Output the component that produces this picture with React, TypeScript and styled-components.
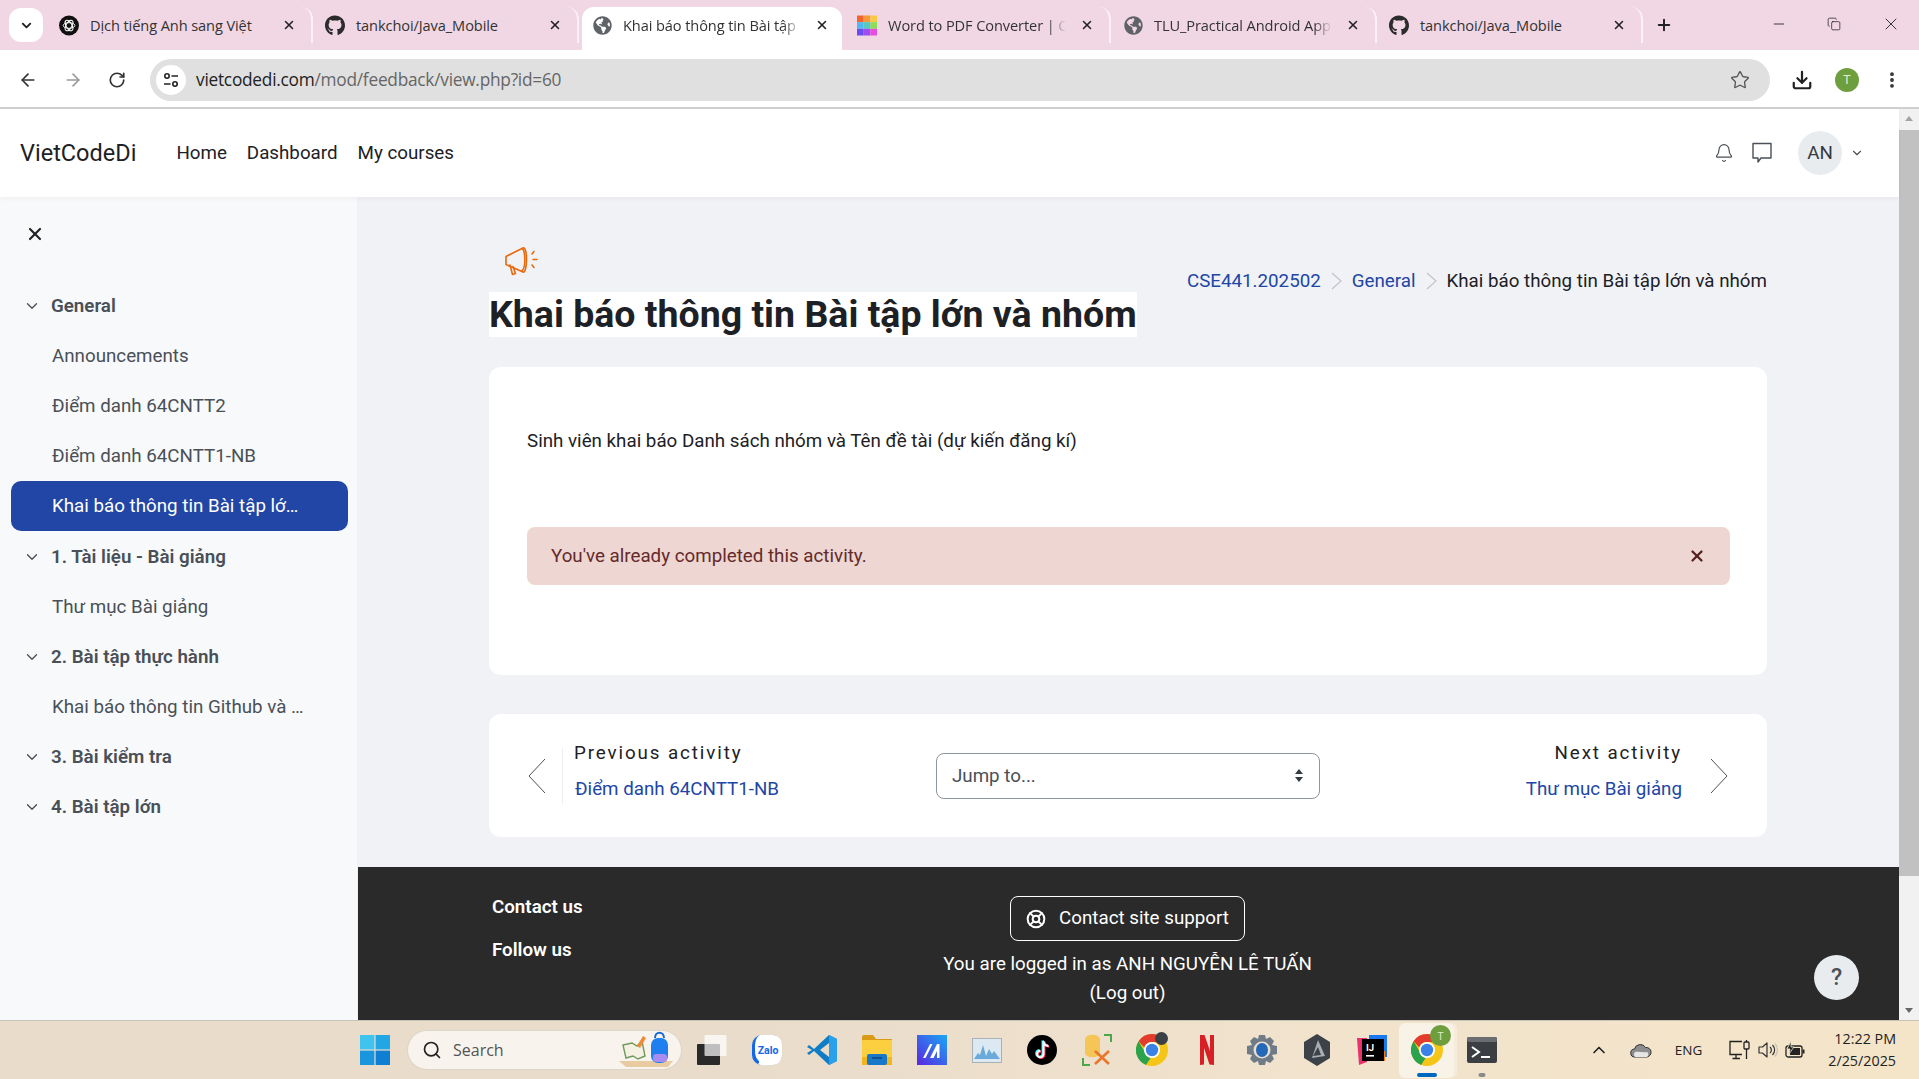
import React from 'react';
import styled, { createGlobalStyle } from 'styled-components';
import {
    ArrowLeft, ArrowRight, RotateCw, Star, Download, EllipsisVertical, Search, Bell, X, ChevronDown,
    ChevronUp, Minus, Plus, Copy, LifeBuoy,
} from 'lucide-react';
import { FaGithub, FaGlobeAmericas } from 'react-icons/fa';

/*
 * Data
*/
type TabData = { title: string; icon: 'gpt' | 'github' | 'globe' | 'pdf'; active?: boolean; fade?: boolean };

const tabs: TabData[] = [
    { title: 'Dịch tiếng Anh sang Việt', icon: 'gpt' },
    { title: 'tankchoi/Java_Mobile', icon: 'github' },
    { title: 'Khai báo thông tin Bài tập', icon: 'globe', active: true, fade: true },
    { title: 'Word to PDF Converter | C', icon: 'pdf', fade: true },
    { title: 'TLU_Practical Android App', icon: 'globe', fade: true },
    { title: 'tankchoi/Java_Mobile', icon: 'github' },
];

type NavRow = { label: string; kind: 'section' | 'item' | 'active' };

const navRows: NavRow[] = [
    { label: 'General', kind: 'section' },
    { label: 'Announcements', kind: 'item' },
    { label: 'Điểm danh 64CNTT2', kind: 'item' },
    { label: 'Điểm danh 64CNTT1-NB', kind: 'item' },
    { label: 'Khai báo thông tin Bài tập lớn và nhóm', kind: 'active' },
    { label: '1. Tài liệu - Bài giảng', kind: 'section' },
    { label: 'Thư mục Bài giảng', kind: 'item' },
    { label: '2. Bài tập thực hành', kind: 'section' },
    { label: 'Khai báo thông tin Github và mã nguồn', kind: 'item' },
    { label: '3. Bài kiểm tra', kind: 'section' },
    { label: '4. Bài tập lớn', kind: 'section' },
];

/*
 * Styling
*/
const GlobalStyle = createGlobalStyle`
    html, body {
        margin: 0;
        height: 100%;
        overflow: hidden;
        font-family: Roboto, "Liberation Sans", sans-serif;
    }
    #root { height: 100%; }
    * { box-sizing: border-box; }
`;

const Screen = styled.div`
    display: flex;
    flex-direction: column;
    height: 1079px;
    background: #fff;
`;

const TabStrip = styled.div`
    display: flex;
    align-items: flex-end;
    height: 50px;
    flex: none;
    padding-left: 9px;
    background: #f1d7e4;
`;

const TabMenu = styled.div`
    display: flex;
    align-items: center;
    justify-content: center;
    width: 34px;
    height: 34px;
    margin: 0 4px 8px 0;
    border-radius: 12px;
    background: #fff;
    color: #222;
`;

const Tab = styled.div<{ $active?: boolean }>`
    display: flex;
    align-items: center;
    flex: none;
    height: ${p => (p.$active ? '43px' : '36px')};
    width: ${p => (p.$active ? '260px' : '266px')};
    margin: ${p => (p.$active ? '0 3px' : '0 0 7px')};
    padding: 0 ${p => (p.$active ? '10px' : '12px')} ${p => (p.$active ? '7px' : '0')} ${p => (p.$active ? '10px' : '12px')};
    border-radius: 12px 12px 0 0;
    background: ${p => (p.$active ? '#fff' : 'transparent')};
    color: #2b2b2b;
    border-right: ${p => (p.$active ? 'none' : '2px solid #fbf1f6')};
`;

const TabIcon = styled.span`
    display: flex;
    flex: none;
    align-items: center;
    justify-content: center;
    width: 20px;
    height: 20px;
    margin-right: 11px;
    font-size: 21px;
`;

const TabTitle = styled.span<{ $fade?: boolean }>`
    flex: 1;
    white-space: nowrap;
    font-family: "Open Sans", "Liberation Sans", sans-serif;
    font-size: 14.6px;
    letter-spacing: -0.1px;
    color: #333;
    ${p => p.$fade && '-webkit-mask-image: linear-gradient(90deg, #000 160px, transparent 178px);'}
`;

const TabClose = styled.span`
    display: flex;
    flex: none;
    width: 14px;
    margin-right: 3px;
    color: #222;
`;

const NewTab = styled.span`
    display: flex;
    margin: 0 0 16px 12px;
    color: #222;
`;

const WindowButtons = styled.div`
    display: flex;
    align-items: center;
    margin: 0 18px 16px auto;
    gap: 40px;
    color: #222;
`;

const Toolbar = styled.div`
    display: flex;
    align-items: center;
    flex: none;
    height: 59px;
    padding: 2px 17px 0 18px;
    background: #fff;
    border-bottom: 2px solid #cfcfcf;
    border-radius: 12px 12px 0 0;
`;

const NavIcons = styled.div`
    display: flex;
    align-items: center;
    gap: 25px;
    color: #333;
`;

const AddressBar = styled.div`
    display: flex;
    align-items: center;
    flex: 1;
    height: 42px;
    margin: 0 21px 0 24px;
    padding: 0 20px 0 6px;
    border-radius: 21px;
    background: #e0e0e0;
`;

const SiteInfo = styled.span`
    display: flex;
    align-items: center;
    justify-content: center;
    width: 30px;
    height: 30px;
    border-radius: 50%;
    background: #fff;
    margin-right: 10px;
    color: #222;
`;

const Url = styled.span`
    flex: 1;
    font-family: "Open Sans", "Liberation Sans", sans-serif;
    font-size: 17.3px;
    letter-spacing: -0.25px;
    color: #666;
    b { font-weight: 400; color: #222; }
`;

const ProfileDot = styled.span`
    display: flex;
    align-items: center;
    justify-content: center;
    width: 24px;
    height: 24px;
    margin: 0 23px 0 22px;
    border-radius: 50%;
    background: #6f9e3f;
    color: #dfeccd;
    font-size: 13px;
`;

const Viewport = styled.div`
    display: flex;
    flex: 1;
    min-height: 0;
    overflow: hidden;
`;

const Page = styled.div`
    display: flex;
    flex-direction: column;
    flex: 1;
    min-width: 0;
`;

const SiteHeader = styled.header`
    display: flex;
    align-items: center;
    flex: none;
    height: 88px;
    padding: 0 35px 0 20px;
    background: #fff;
    box-shadow: 0 2px 4px rgba(0, 0, 0, 0.04);
    z-index: 2;
`;

const Brand = styled.span`
    margin-right: 40px;
    font-size: 23.5px;
    color: #1d2125;
`;

const HeaderLink = styled.span`
    margin-right: 20px;
    font-size: 18.75px;
    color: #1d2125;
`;

const HeaderRight = styled.div`
    display: flex;
    align-items: center;
    margin-left: auto;
    color: #495057;
`;

const BellSlot = styled.span`
    display: flex;
    margin-right: 18px;
`;

const Avatar = styled.span`
    display: flex;
    align-items: center;
    justify-content: center;
    width: 44px;
    height: 44px;
    margin: 0 8px 0 26px;
    border-radius: 50%;
    background: #e9ecef;
    font-size: 18.75px;
    color: #343a40;
`;

const Body = styled.div`
    display: flex;
    flex: 1;
    min-height: 0;
`;

const Sidebar = styled.aside`
    flex: none;
    width: 358px;
    padding: 0 9px 0 11px;
    background: #f8f9fa;
    border-right: 1px solid #eef0f2;
`;

const SidebarClose = styled.div`
    display: flex;
    align-items: center;
    height: 84px;
    padding: 0 0 11px 14px;
    color: #1d2125;
`;

const SidebarRow = styled.div<{ $kind: NavRow['kind'] }>`
    display: flex;
    align-items: center;
    height: 50.1px;
    padding: 0 ${p => (p.$kind === 'section' ? '0' : p.$kind === 'active' ? '48px' : '43px')} 0 ${p => (p.$kind === 'section' ? '12px' : '41px')};
    border-radius: 10px;
    font-size: 18.75px;
    font-weight: ${p => (p.$kind === 'section' ? 600 : 400)};
    background: ${p => (p.$kind === 'active' ? '#2146a5' : 'transparent')};
    color: ${p => (p.$kind === 'active' ? '#fff' : '#495057')};
    svg { flex: none; margin-right: 10px; color: #495057; }
    span { overflow: hidden; white-space: nowrap; text-overflow: ellipsis; }
`;

const Main = styled.main`
    position: relative;
    display: flex;
    flex-direction: column;
    flex: 1;
    min-width: 0;
    overflow: hidden;
    background: #f0f2f6;
`;

const Content = styled.div`
    flex: none;
    padding: 49px 132px 30px 131px;
`;

const PageHead = styled.div`
    display: flex;
    justify-content: space-between;
    align-items: flex-start;
`;

const PageIcon = styled.div`
    height: 46px;
    padding-left: 16px;
`;

const Title = styled.h1`
    display: inline-block;
    margin: 0;
    height: 45px;
    line-height: 45px;
    font-size: 37.5px;
    font-weight: 700;
    background: #fff;
    color: #1d2125;
    white-space: nowrap;
`;

const Breadcrumb = styled.nav`
    display: flex;
    align-items: center;
    margin-top: 24px;
    font-size: 18.75px;
    color: #1d2125;
    svg { margin: 0 10px; color: #c0c4c9; }
`;

const CrumbLink = styled.span`
    color: #2146a5;
`;

const Card = styled.section`
    margin-top: 30px;
    height: 308px;
    padding: 60px 37px 0 38px;
    border-radius: 12px;
    background: #fff;
`;

const Intro = styled.p`
    margin: 0 0 72px;
    line-height: 28px;
    font-size: 18.75px;
    color: #1d2125;
`;

const Alert = styled.div`
    display: flex;
    align-items: center;
    justify-content: space-between;
    height: 58px;
    padding: 0 24px;
    border-radius: 8px;
    background: #eed6d2;
    font-size: 18.75px;
    color: #642a2a;
    svg { color: #53201f; }
`;

const PagerCard = styled.section`
    display: grid;
    grid-template-columns: 1fr 384px 1fr;
    align-items: center;
    height: 123px;
    margin-top: 39px;
    padding: 0 39px;
    border-radius: 12px;
    background: #fff;
`;

const Pager = styled.div<{ $right?: boolean }>`
    display: flex;
    align-items: center;
    justify-content: ${p => (p.$right ? 'flex-end' : 'flex-start')};
    text-align: ${p => (p.$right ? 'right' : 'left')};
    color: #343a40;
`;

const PagerText = styled.div<{ $right?: boolean }>`
    height: 56px;
    margin: ${p => (p.$right ? '0 28px 0 0' : '0 0 0 16px')};
    padding-left: ${p => (p.$right ? '0' : '11px')};
    border-left: ${p => (p.$right ? 'none' : '1px solid #eceef0')};
`;

const PagerLabel = styled.div`
    margin-top: -6px;
    font-size: 18.75px;
    letter-spacing: 1.9px;
    line-height: 22px;
    color: #1d2125;
`;

const PagerLink = styled.div`
    margin-top: 13px;
    padding-left: 1px;
    font-size: 18.75px;
    line-height: 24px;
    color: #2146a5;
`;

const JumpSelect = styled.div`
    display: flex;
    align-items: center;
    justify-content: space-between;
    height: 46px;
    padding: 0 16px 0 15px;
    border: 1px solid #8f959e;
    border-radius: 8px;
    font-size: 18.75px;
    color: #495057;
`;

const Spinner = styled.span`
    display: flex;
    flex-direction: column;
    gap: 3px;
    &::before, &::after {
        content: '';
        border-left: 4px solid transparent;
        border-right: 4px solid transparent;
    }
    &::before { border-bottom: 5px solid #343a40; }
    &::after { border-top: 5px solid #343a40; }
`;

const Footer = styled.footer`
    display: grid;
    grid-template-columns: 1fr 384px 1fr;
    flex: 1;
    padding: 29px 132px 0 134px;
    background: #2a2a2a;
    color: #fff;
    font-size: 18.75px;
`;

const FooterHeads = styled.div`
    display: flex;
    flex-direction: column;
    gap: 19px;
    margin-top: -1px;
    font-weight: 600;
    line-height: 24px;
`;

const FooterCenter = styled.div`
    display: flex;
    flex-direction: column;
    align-items: center;
    margin-left: -4px;
    white-space: nowrap;
    line-height: 28.5px;
`;

const SupportButton = styled.div`
    display: flex;
    align-items: center;
    gap: 13px;
    height: 45px;
    margin-bottom: 9px;
    padding: 0 15px;
    border: 1px solid #fff;
    border-radius: 8px;
`;

const HelpButton = styled.div`
    position: absolute;
    right: 40px;
    bottom: 20px;
    display: flex;
    align-items: center;
    justify-content: center;
    width: 45px;
    height: 45px;
    border-radius: 50%;
    background: #e9ecef;
    font-size: 23px;
    font-weight: 500;
    color: #495057;
`;

const Scrollbar = styled.div`
    display: flex;
    flex-direction: column;
    flex: none;
    width: 20px;
    background: #f1f1f1;
`;

const ScrollArrow = styled.div<{ $down?: boolean }>`
    flex: none;
    width: 0;
    height: 0;
    margin: 7px 6px;
    border-left: 4px solid transparent;
    border-right: 4px solid transparent;
    ${p => (p.$down ? 'border-top: 5px solid #666;' : 'border-bottom: 5px solid #a3a3a3;')}
`;

const ScrollThumb = styled.div`
    flex: none;
    height: 746px;
    margin-top: 2px;
    background: #c1c1c1;
`;

const ScrollTrack = styled.div`
    flex: 1;
`;

const Taskbar = styled.div`
    display: flex;
    align-items: center;
    flex: none;
    height: 59px;
    padding: 0 23px 0 360px;
    border-top: 1px solid #c9c2b6;
    background: linear-gradient(90deg, #eadccb 0%, #e9dccb 40%, #f1e3cc 70%, #f4e5c9 100%);
`;

const TaskSearch = styled.div`
    position: relative;
    display: flex;
    align-items: center;
    width: 273px;
    height: 38px;
    margin: 0 3px 0 18px;
    padding-left: 14px;
    border-radius: 19px;
    background: #f8f4ed;
    box-shadow: 0 0 0 1px #ddd5c8;
    font-family: "Open Sans", "Liberation Sans", sans-serif;
    font-size: 16px;
    color: #555;
    svg.lens { margin-right: 11px; color: #222; }
`;

const SearchArt = styled.span`
    position: absolute;
    right: 6px;
    bottom: 0;
    display: flex;
`;

const TaskSlot = styled.div<{ $open?: boolean }>`
    position: relative;
    display: flex;
    align-items: center;
    justify-content: center;
    flex: none;
    width: 55px;
    height: 55px;
    border-radius: 6px;
    background: ${p => (p.$open ? '#f9f2e6' : 'transparent')};
    box-shadow: ${p => (p.$open ? '3px 0 0 #f6ecdc' : 'none')};
`;

const TaskBadge = styled.span<{ $small?: boolean }>`
    position: absolute;
    top: ${p => (p.$small ? '9px' : '2px')};
    right: ${p => (p.$small ? '11px' : '3px')};
    display: flex;
    align-items: center;
    justify-content: center;
    width: ${p => (p.$small ? '13px' : '21px')};
    height: ${p => (p.$small ? '13px' : '21px')};
    border-radius: 50%;
    background: ${p => (p.$small ? '#3a4046' : '#6f9e3f')};
    color: #dfeccd;
    font-family: "Open Sans", sans-serif;
    font-size: 11px;
`;

const TaskMark = styled.span<{ $active?: boolean }>`
    position: absolute;
    bottom: 1px;
    left: 50%;
    width: ${p => (p.$active ? '20px' : '7px')};
    height: 4px;
    transform: translateX(-50%);
    border-radius: 3px;
    background: ${p => (p.$active ? '#0067c0' : '#8a8a8a')};
`;

const Tray = styled.div`
    display: flex;
    align-items: center;
    margin-left: auto;
    color: #222;
    font-family: "Open Sans", "Liberation Sans", sans-serif;
`;

const TrayChevron = styled.span`
    display: flex;
    margin-right: 21px;
`;

const TrayLang = styled.span`
    margin: 0 27px 0 23px;
    font-size: 13.5px;
`;

const TrayIcons = styled.div`
    display: flex;
    align-items: center;
    gap: 7px;
    margin-right: 23px;
`;

const Clock = styled.div`
    text-align: right;
    font-size: 14.3px;
    line-height: 22px;
`;

/*
 * Icons
*/
const GptIcon = () => (
    <svg width="21" height="21" viewBox="0 0 24 24">
        <circle cx="12" cy="12" r="12" fill="#111" />
        <g fill="none" stroke="#fff" strokeWidth="1.2">
            <ellipse cx="12" cy="12" rx="7" ry="3.4" />
            <ellipse cx="12" cy="12" rx="7" ry="3.4" transform="rotate(60 12 12)" />
            <ellipse cx="12" cy="12" rx="7" ry="3.4" transform="rotate(120 12 12)" />
        </g>
    </svg>
);

const PdfIcon = () => {
    const colors = ['#f0642e', '#f59a3c', '#f7c948', '#4fb8f0', '#58c8c0', '#8ddc5a', '#6a4df0', '#a04df0', '#e84ddc'];
    return (
        <svg width="21" height="21" viewBox="0 0 21 21">
            {colors.map((c, i) => (
                <rect key={c} x={(i % 3) * 7} y={Math.floor(i / 3) * 7} width="7" height="7" fill={c} />
            ))}
        </svg>
    );
};

const tabIcon = (kind: TabData['icon']) => {
    if (kind === 'gpt') return <GptIcon />;
    if (kind === 'github') return <FaGithub color="#2b2b2b" />;
    if (kind === 'globe') return <FaGlobeAmericas color="#5f6368" size={19} />;
    return <PdfIcon />;
};

const TuneIcon = () => (
    <svg width="16" height="16" viewBox="0 0 16 16" fill="none" stroke="currentColor" strokeWidth="1.6">
        <circle cx="4" cy="4" r="2.2" />
        <path d="M8.5 4H15M1 12h6.5" />
        <circle cx="12" cy="12" r="2.2" />
    </svg>
);

const BullhornIcon = () => (
    <svg width="36" height="30" viewBox="0 0 36 30" fill="none" stroke="#e8690c" strokeWidth="1.6" strokeLinecap="round" strokeLinejoin="round">
        <path d="M1 10.5l17-8.5c2-1 3.5 4 3.5 11.5S20 27 18 26L1 18.500z" />
        <path d="M17 2.500c2 1 2.800 5 2.800 11s-.8 10-2.800 11" />
        <path d="M5 19l2.500 9.500 3-1L8 20.500" />
        <path d="M27 8l2-2.500M28 13.500h4M27 19l2 2.500" />
    </svg>
);

const BackChevron = ({ flip }: { flip?: boolean }) => (
    <svg width="18" height="36" viewBox="0 0 18 36" style={{ flex: 'none' }}>
        <polyline points={flip ? '1,1 17,18 1,35' : '17,1 1,18 17,35'} fill="none" stroke="#495057" strokeWidth="1" />
    </svg>
);

const CrumbArrow = () => (
    <svg width="11" height="18" viewBox="0 0 11 18">
        <polyline points="1,1 10,9 1,17" fill="none" stroke="currentColor" strokeWidth="1.2" />
    </svg>
);

const ChatIcon = () => (
    <svg width="20" height="22" viewBox="0 0 20 22" fill="none" stroke="#495057" strokeWidth="1.4">
        <path d="M1 1.500h18v14.500H9l-3 4v-4H1z" strokeLinejoin="round" />
    </svg>
);

const StartLogo = () => (
    <svg width="30" height="30" viewBox="0 0 30 30">
        <rect x="0" y="0" width="14.4" height="14.4" fill="#3fc3ef" />
        <rect x="15.6" y="0" width="14.4" height="14.4" fill="#22a7e6" />
        <rect x="0" y="15.6" width="14.4" height="14.4" fill="#1a96df" />
        <rect x="15.6" y="15.6" width="14.4" height="14.4" fill="#0e7fd2" />
    </svg>
);

const SearchDoodle = () => (
    <svg width="56" height="38" viewBox="0 0 56 38">
        <path d="M0 30h54l-5 6H7z" fill="#e8cba0" />
        <path d="M4 14l9-2 5 3 5-5 3 15-7 3-5-3-7 2z" fill="#f4f1e2" stroke="#6f9a5c" strokeWidth="1.4" />
        <path d="M18 15l6-10 3 2-6 10z" fill="#f08a3a" />
        <rect x="32" y="7" width="17" height="25" rx="7" fill="#1f7ff0" />
        <path d="M36 7c0-7 9-7 9 0" fill="none" stroke="#1767d4" strokeWidth="2" />
        <rect x="34" y="23" width="14" height="8" rx="3" fill="#a88cf0" />
    </svg>
);

const TaskView = () => (
    <svg width="32" height="30" viewBox="0 0 32 30">
        <rect x="1" y="9" width="23" height="21" rx="1" fill="#2a2a2a" />
        <rect x="8.500" y="0" width="22" height="21" rx="1" fill="#fff" fillOpacity="0.7" />
    </svg>
);

const ZaloIcon = () => (
    <svg width="30" height="32" viewBox="0 0 30 32">
        <rect x="0" y="1" width="30" height="30" rx="10" fill="#1268e8" />
        <path d="M8 1h13a9 9 0 0 1 9 9v12a9 9 0 0 1-9 9H9l-3-1c2-2 1-3 0-4C3 23 3 18 3 14c0-6 1-11 5-13z" fill="#fff" />
        <text x="16" y="20" textAnchor="middle" fontSize="10.500" fontFamily="Roboto, sans-serif" fontWeight="700" fill="#1268e8">Zalo</text>
    </svg>
);

const VsCodeIcon = () => (
    <svg width="32" height="32" viewBox="0 0 32 32">
        <path d="M23 1l8 4v22l-8 4L8 17l-5 4-2-2 5-3-5-3 2-2 5 4z" fill="#0f7cc6" />
        <path d="M23 1l8 4v22l-8 4z" fill="#2ba0ea" />
        <path d="M23 9l-9 7 9 7z" fill="#eadccb" />
    </svg>
);

const FolderIcon = () => (
    <svg width="30" height="30" viewBox="0 0 30 30">
        <path d="M0 2a2 2 0 0 1 2-2h9l3 4h16v6H0z" fill="#d99a16" />
        <rect x="0" y="5" width="30" height="25" rx="1" fill="#fbcf3f" />
        <rect x="0" y="22" width="30" height="8" fill="#f2b51d" />
        <rect x="5" y="19" width="20" height="11" rx="2" fill="#1678c8" />
        <rect x="10" y="22" width="10" height="2" fill="#0f4f8e" />
    </svg>
);

const MatlabishIcon = () => (
    <svg width="30" height="30" viewBox="0 0 30 30">
        <defs>
            <linearGradient id="mGrad" x1="1" y1="0" x2="0" y2="1">
                <stop offset="0" stopColor="#19a7f5" />
                <stop offset="1" stopColor="#5a26e0" />
            </linearGradient>
        </defs>
        <rect width="30" height="30" fill="url(#mGrad)" />
        <path d="M6 23l7-14h2.500l-7 14zM13 23l7-14h2.500v14h-2.500v-7l-3.500 7z" fill="#fff" />
    </svg>
);

const ActivityIcon = () => (
    <svg width="30" height="30" viewBox="0 0 30 30">
        <rect x="0.500" y="3.500" width="29" height="24" fill="#dce9f3" stroke="#a9b1b8" />
        <path d="M2 24l4-6 2 2 3-10 3 11 3-7 3 5 2-3 6 8z" fill="#6aa9d9" />
    </svg>
);

const TikTokIcon = () => (
    <svg width="30" height="30" viewBox="0 0 30 30">
        <circle cx="15" cy="15" r="15" fill="#000" />
        <path d="M16.500 6v13a3.200 3.200 0 1 1-3.200-3.200M16.500 6c.3 3 2.300 4.800 5 5" fill="none" stroke="#25f4ee" strokeWidth="2.400" transform="translate(-0.8 -0.6)" />
        <path d="M16.500 6v13a3.200 3.200 0 1 1-3.200-3.200M16.500 6c.3 3 2.300 4.800 5 5" fill="none" stroke="#fe2c55" strokeWidth="2.400" transform="translate(0.8 0.6)" />
        <path d="M16.500 6v13a3.200 3.200 0 1 1-3.200-3.200M16.500 6c.3 3 2.300 4.800 5 5" fill="none" stroke="#fff" strokeWidth="2" />
    </svg>
);

const ToolsIcon = () => (
    <svg width="30" height="32" viewBox="0 0 30 32">
        <path d="M3 5a7 4 0 0 1 15 0v14a7 4 0 0 1-15 0z" fill="#f5c558" />
        <path d="M22 1h7v7M1 24v7h7" fill="none" stroke="#4aa84a" strokeWidth="2" />
        <path d="M13 30l14-13M27 30L13 17" stroke="#e8762c" strokeWidth="2.600" />
    </svg>
);

const ChromeIcon = () => (
    <svg width="32" height="32" viewBox="0 0 32 32">
        <circle cx="16" cy="16" r="16" fill="#f5c518" />
        <path d="M16 0a16 16 0 0 1 13.900 8H16a8 8 0 0 0-7.600 5.500L2.600 7.200A16 16 0 0 1 16 0z" fill="#e33b2e" />
        <path d="M2.600 7.200l6 10.500a8 8 0 0 0 6 6.200L10 31A16 16 0 0 1 2.600 7.200z" fill="#2ba24c" />
        <circle cx="16" cy="16" r="8" fill="#fff" />
        <circle cx="16" cy="16" r="6.200" fill="#3b82e6" />
    </svg>
);

const NetflixIcon = () => (
    <svg width="16" height="30" viewBox="0 0 16 30">
        <path d="M1 0h4.500L11 16V0h4v30l-4.500-.5L5 13v16.500L1 30z" fill="#d81f26" />
    </svg>
);

const GearIcon = () => (
    <svg width="32" height="32" viewBox="0 0 32 32">
        <path d="M13 1h6l1 4 4-2 4 4-2 4 5 1v8l-5 1 2 4-4 4-4-2-1 4h-6l-1-4-4 2-4-4 2-4-5-1v-8l5-1-2-4 4-4 4 2z" fill="#6f7c88" />
        <circle cx="16" cy="16" r="8.500" fill="#e9ded0" />
        <ellipse cx="16" cy="16" rx="6" ry="7" fill="#2468b8" />
    </svg>
);

const HexIcon = () => (
    <svg width="28" height="32" viewBox="0 0 28 32">
        <path d="M14 0l13 8v16l-13 8-13-8V8z" fill="#3c4248" />
        <path d="M15 6l7 16-13 2z" fill="#a8aeb4" />
        <path d="M15 13l3 8-8 1z" fill="#3c4248" />
    </svg>
);

const IdeaIcon = () => (
    <svg width="30" height="30" viewBox="0 0 30 30">
        <path d="M12 0h18v22H12z" fill="#1c78ee" />
        <path d="M0 3h10v24l-8 3z" fill="#e8336d" />
        <path d="M14 16h14v10H14z" fill="#f97a12" />
        <rect x="5" y="4" width="22" height="22" fill="#000" />
        <text x="9" y="15.500" fontSize="9.500" fontWeight="700" fontFamily="Roboto, sans-serif" fill="#fff">IJ</text>
        <rect x="9" y="20" width="8" height="1.600" fill="#fff" />
    </svg>
);

const TerminalIcon = () => (
    <svg width="30" height="26" viewBox="0 0 30 26">
        <rect width="30" height="26" rx="2" fill="#3b3f44" />
        <rect width="30" height="5" rx="2" fill="#6a6e73" />
        <path d="M5 10l7 5-7 5" fill="none" stroke="#fff" strokeWidth="2" />
        <rect x="14" y="19" width="9" height="2" fill="#fff" />
    </svg>
);

const TrayCloud = () => (
    <svg width="22" height="16" viewBox="0 0 22 16">
        <path d="M5 15a4 4 0 0 1-.5-8 6 6 0 0 1 11-1.500A4.800 4.800 0 0 1 17 15z" fill="#8d8d8d" stroke="#333" strokeWidth="1" />
        <path d="M5 15a4 4 0 0 1 0-5c4-1 8 1 12 0a3 3 0 0 1 0 5z" fill="#e6e6e6" />
    </svg>
);

const TrayNetwork = () => (
    <svg width="22" height="22" viewBox="0 0 22 22" fill="none" stroke="#222" strokeWidth="1.300">
        <path d="M13 2.500H1v13h12M7 15.500v4M3.500 19.500H11" />
        <rect x="15" y="3" width="5" height="7" rx="1" />
        <path d="M17.500 1v2M17.500 10v10" />
    </svg>
);

const TraySpeaker = () => (
    <svg width="20" height="18" viewBox="0 0 20 18" fill="none" stroke="#333" strokeWidth="1.200">
        <path d="M1 6h3.500L9 2v14l-4.500-4H1z" strokeLinejoin="round" />
        <path d="M12 6a4 4 0 0 1 0 6M14.500 4a7 7 0 0 1 0 10" />
        <path d="M17 2.500a10 10 0 0 1 0 13" stroke="#c8c2b8" />
    </svg>
);

const TrayBattery = () => (
    <svg width="20" height="18" viewBox="0 0 20 18">
        <rect x="1" y="5" width="16" height="11" rx="2" fill="none" stroke="#222" strokeWidth="1.300" />
        <rect x="5" y="7" width="10" height="7" fill="#222" />
        <rect x="17.500" y="8.500" width="2" height="4" fill="#222" />
        <path d="M6 0L2 8h3l-1 5 5-7H6z" fill="#222" stroke="#f2e4cb" strokeWidth="0.800" />
    </svg>
);

/*
 * Component
*/
const App: React.FC = () => (
    <>
        <GlobalStyle />
        <Screen>
            <TabStrip>
                <TabMenu><ChevronDown size={15} strokeWidth={3} /></TabMenu>
                {tabs.map((tab, i) => (
                    <Tab key={i} $active={tab.active}>
                        <TabIcon>{tabIcon(tab.icon)}</TabIcon>
                        <TabTitle $fade={tab.fade}>{tab.title}</TabTitle>
                        <TabClose><X size={14} strokeWidth={2.6} /></TabClose>
                    </Tab>
                ))}
                <NewTab><Plus size={18} strokeWidth={2.6} /></NewTab>
                <WindowButtons>
                    <Minus size={16} strokeWidth={1.3} />
                    <Copy size={14} strokeWidth={1.3} />
                    <X size={20} strokeWidth={1.1} />
                </WindowButtons>
            </TabStrip>

            <Toolbar>
                <NavIcons>
                    <ArrowLeft size={20} strokeWidth={2} />
                    <ArrowRight size={20} strokeWidth={2} color="#9a9a9a" />
                    <RotateCw size={18} strokeWidth={2.2} />
                </NavIcons>
                <AddressBar>
                    <SiteInfo><TuneIcon /></SiteInfo>
                    <Url><b>vietcodedi.com</b>/mod/feedback/view.php?id=60</Url>
                    <Star size={20} strokeWidth={1.6} color="#555" />
                </AddressBar>
                <Download size={22} strokeWidth={2.4} color="#222" />
                <ProfileDot>T</ProfileDot>
                <EllipsisVertical size={20} strokeWidth={2.6} color="#333" />
            </Toolbar>

            <Viewport>
                <Page>
                    <SiteHeader>
                        <Brand>VietCodeDi</Brand>
                        <HeaderLink>Home</HeaderLink>
                        <HeaderLink>Dashboard</HeaderLink>
                        <HeaderLink>My courses</HeaderLink>
                        <HeaderRight>
                            <BellSlot><Bell size={20} strokeWidth={1.4} /></BellSlot>
                            <ChatIcon />
                            <Avatar>AN</Avatar>
                            <ChevronDown size={14} strokeWidth={2} />
                        </HeaderRight>
                    </SiteHeader>
                    <Body>
                        <Sidebar>
                            <SidebarClose><X size={20} strokeWidth={2.6} /></SidebarClose>
                            {navRows.map(row => (
                                <SidebarRow key={row.label} $kind={row.kind}>
                                    {row.kind === 'section' && <ChevronDown size={18} strokeWidth={1.8} />}
                                    <span>{row.label}</span>
                                </SidebarRow>
                            ))}
                        </Sidebar>
                        <Main>
                            <Content>
                                <PageHead>
                                    <div>
                                        <PageIcon><BullhornIcon /></PageIcon>
                                        <Title>Khai báo thông tin Bài tập lớn và nhóm</Title>
                                    </div>
                                    <Breadcrumb>
                                        <CrumbLink>CSE441.202502</CrumbLink>
                                        <CrumbArrow />
                                        <CrumbLink>General</CrumbLink>
                                        <CrumbArrow />
                                        <span>Khai báo thông tin Bài tập lớn và nhóm</span>
                                    </Breadcrumb>
                                </PageHead>
                                <Card>
                                    <Intro>Sinh viên khai báo Danh sách nhóm và Tên đề tài (dự kiến đăng kí)</Intro>
                                    <Alert>
                                        You've already completed this activity.
                                        <X size={18} strokeWidth={3} />
                                    </Alert>
                                </Card>
                                <PagerCard>
                                    <Pager>
                                        <BackChevron />
                                        <PagerText>
                                            <PagerLabel>Previous activity</PagerLabel>
                                            <PagerLink>Điểm danh 64CNTT1-NB</PagerLink>
                                        </PagerText>
                                    </Pager>
                                    <JumpSelect>Jump to...<Spinner /></JumpSelect>
                                    <Pager $right>
                                        <PagerText $right>
                                            <PagerLabel>Next activity</PagerLabel>
                                            <PagerLink>Thư mục Bài giảng</PagerLink>
                                        </PagerText>
                                        <BackChevron flip />
                                    </Pager>
                                </PagerCard>
                            </Content>
                            <Footer>
                                <FooterHeads>
                                    <span>Contact us</span>
                                    <span>Follow us</span>
                                </FooterHeads>
                                <FooterCenter>
                                    <SupportButton><LifeBuoy size={20} strokeWidth={2.4} />Contact site support</SupportButton>
                                    <span>You are logged in as ANH NGUYỄN LÊ TUẤN</span>
                                    <span>(Log out)</span>
                                </FooterCenter>
                            </Footer>
                            <HelpButton>?</HelpButton>
                        </Main>
                    </Body>
                </Page>
                <Scrollbar>
                    <ScrollArrow />
                    <ScrollThumb />
                    <ScrollTrack />
                    <ScrollArrow $down />
                </Scrollbar>
            </Viewport>

            <Taskbar>
                <StartLogo />
                <TaskSearch>
                    <Search className="lens" size={20} strokeWidth={2} />
                    Search
                    <SearchArt><SearchDoodle /></SearchArt>
                </TaskSearch>
                <TaskSlot><TaskView /></TaskSlot>
                <TaskSlot><ZaloIcon /></TaskSlot>
                <TaskSlot><VsCodeIcon /></TaskSlot>
                <TaskSlot><FolderIcon /></TaskSlot>
                <TaskSlot><MatlabishIcon /></TaskSlot>
                <TaskSlot><ActivityIcon /></TaskSlot>
                <TaskSlot><TikTokIcon /></TaskSlot>
                <TaskSlot><ToolsIcon /></TaskSlot>
                <TaskSlot><ChromeIcon /><TaskBadge $small /></TaskSlot>
                <TaskSlot><NetflixIcon /></TaskSlot>
                <TaskSlot><GearIcon /></TaskSlot>
                <TaskSlot><HexIcon /></TaskSlot>
                <TaskSlot><IdeaIcon /></TaskSlot>
                <TaskSlot $open><ChromeIcon /><TaskBadge>T</TaskBadge><TaskMark $active /></TaskSlot>
                <TaskSlot><TerminalIcon /><TaskMark /></TaskSlot>
                <Tray>
                    <TrayChevron><ChevronUp size={20} strokeWidth={2} /></TrayChevron>
                    <TrayCloud />
                    <TrayLang>ENG</TrayLang>
                    <TrayIcons>
                        <TrayNetwork />
                        <TraySpeaker />
                        <TrayBattery />
                    </TrayIcons>
                    <Clock>12:22 PM<br />2/25/2025</Clock>
                </Tray>
            </Taskbar>
        </Screen>
    </>
);

export default App;
